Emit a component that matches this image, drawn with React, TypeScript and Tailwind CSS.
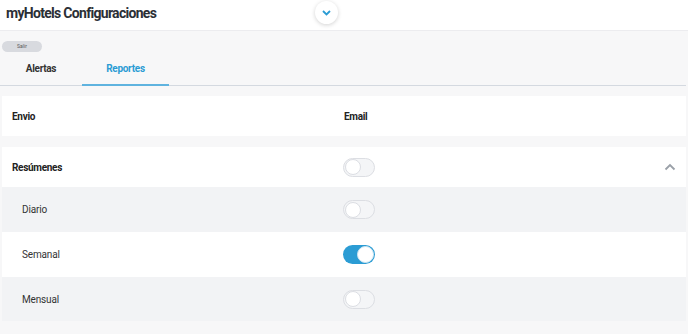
import React from "react";

function Toggle({ on }: { on?: boolean }) {
  return on ? (
    <div className="w-[32px] h-[19px] rounded-full bg-[#2b9cd4] flex items-center justify-end pr-[1px]">
      <div className="w-[17px] h-[17px] rounded-full bg-white border border-[#d0e6f2]" />
    </div>
  ) : (
    <div className="w-[32px] h-[19px] rounded-full bg-[#f4f5f7] border border-[#dcdee3] flex items-center pl-[1px]">
      <div className="w-[16px] h-[16px] rounded-full bg-white border border-[#dcdee3]" />
    </div>
  );
}

export default function App() {
  return (
    <div
      className="w-[688px] h-[334px] bg-[#f7f7f8] overflow-hidden text-[#222]"
      style={{ fontFamily: "Roboto, 'Noto Sans', sans-serif" }}
    >
      <div className="h-[31px] bg-white flex items-center relative border-b border-[#ececef]">
        <div className="pl-[6px] text-[14px] font-bold tracking-[-0.7px] text-[#2b2f36] leading-none pb-[4px]">
          myHotels Configuraciones
        </div>
        <div className="absolute left-[315px] top-[1px] w-[23px] h-[23px] rounded-full bg-white shadow-[0_1px_4px_rgba(0,0,0,0.18)] flex items-center justify-center">
          <svg width="9" height="6" viewBox="0 0 9 6">
            <path d="M1 1l3.5 3.5L8 1" fill="none" stroke="#2b9cd4" strokeWidth="1.8" />
          </svg>
        </div>
      </div>
      <div className="pt-[10px] pr-[2px]">
        <div className="ml-[2px] w-[40px] h-[11px] rounded-full bg-[#d8dadf] flex items-center justify-center text-[5px] text-[#555]">
          Salir
        </div>
        <div className="flex h-[34px] border-b border-[#d4d9e0]">
          <div className="w-[82px] flex items-center justify-center text-[10px] font-bold tracking-[-0.3px] text-[#333]">Alertas</div>
          <div className="w-[87px] flex items-center justify-center text-[10px] font-bold tracking-[-0.3px] text-[#2b9cd4] border-b-2 border-[#5fb3df] mb-[-1px]">
            Reportes
          </div>
        </div>
        <div className="mt-[10px] ml-[2px] bg-white h-[40px] flex items-center text-[10px] font-bold tracking-[-0.3px] text-[#222]">
          <div className="w-[342px] pl-[10px]">Envio</div>
          <div>Email</div>
        </div>
        <div className="mt-[11px] ml-[2px] bg-white h-[40px] flex items-center text-[10px] font-bold tracking-[-0.3px] text-[#222]">
          <div className="w-[341px] pl-[10px]">Resúmenes</div>
          <Toggle />
          <div className="flex-1 flex justify-end pr-[10px]">
            <svg width="12" height="8" viewBox="0 0 12 8">
              <path d="M1.5 6.5L6 2l4.5 4.5" fill="none" stroke="#9aa0a8" strokeWidth="1.8" />
            </svg>
          </div>
        </div>
        <div className="ml-[2px] bg-[#f2f3f5] h-[45px] flex items-center text-[10px] tracking-[-0.15px] text-[#333]">
          <div className="w-[341px] pl-[20px]">Diario</div>
          <Toggle />
        </div>
        <div className="ml-[2px] bg-white h-[45px] flex items-center text-[10px] tracking-[-0.15px] text-[#333]">
          <div className="w-[341px] pl-[20px]">Semanal</div>
          <Toggle on />
        </div>
        <div className="ml-[2px] bg-[#f2f3f5] h-[44px] flex items-center text-[10px] tracking-[-0.15px] text-[#333]">
          <div className="w-[341px] pl-[20px]">Mensual</div>
          <Toggle />
        </div>
      </div>
    </div>
  );
}
